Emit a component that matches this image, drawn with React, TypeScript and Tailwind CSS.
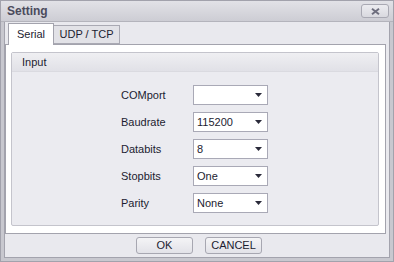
import { ReactNode } from 'react';

const ROWS = [
  { label: 'COMport', value: '' },
  { label: 'Baudrate', value: '115200' },
  { label: 'Databits', value: '8' },
  { label: 'Stopbits', value: 'One' },
  { label: 'Parity', value: 'None' },
];

const font = { fontFamily: '"Liberation Sans", Arial, sans-serif' };

function Combo({ value }: { value: string }) {
  return (
    <div className="w-[75px] h-[20px] border border-[#a9a9b6] bg-white flex items-center pl-[3px] pr-[5px] text-[11px] text-[#1c1c30]">
      <span className="flex-1">{value}</span>
      <svg width="7" height="4" viewBox="0 0 7 4">
        <path d="M0 0 H7 L3.5 4 Z" fill="#2a2a3a" />
      </svg>
    </div>
  );
}

function Btn({ children }: { children: ReactNode }) {
  return (
    <div className="w-[57px] h-[17px] rounded-[3px] border border-[#a7a7b1] bg-gradient-to-b from-[#f4f4f6] to-[#e2e2e8] flex items-center justify-center text-[11px] text-[#1c1c30]">
      {children}
    </div>
  );
}

export default function App() {
  return (
    <div style={font} className="w-[394px] h-[262px] border border-[#a2a2ac] bg-[#c8c8cf] flex flex-col">
      {/* title bar */}
      <div className="h-[21px] bg-gradient-to-b from-[#e2e2e7] to-[#cdcdd4] border-b border-[#b4b4bc] flex items-center pl-[6px] pr-[4px]">
        <span className="flex-1 text-[12px] font-bold text-[#4b4b5c]">Setting</span>
        <div className="w-[28px] h-[14px] rounded-[3px] border border-[#a9a9b3] bg-gradient-to-b from-[#ececf0] to-[#d9d9df] flex items-center justify-center">
          <svg width="9" height="7" viewBox="0 0 9 7">
            <path d="M1 0.8 L8 6.2 M8 0.8 L1 6.2" stroke="#6e6e7e" strokeWidth="2" />
          </svg>
        </div>
      </div>

      <div className="flex-1 mx-[3px] mb-[3px] border-x border-b border-[#a3a3ad] bg-[#e9e9ee] flex flex-col">
        {/* tabs */}
        <div className="h-[22px] flex items-end pl-[3px] text-[11px] text-[#1c1c30] relative z-10">
          <div className="w-[46px] h-[22px] bg-white border border-b-0 border-[#a3a3ad] flex items-center justify-center -mb-px">
            Serial
          </div>
          <div className="w-[66px] h-[19px] bg-[#e2e2e7] border border-l-0 border-[#a9a9b3] flex items-center justify-center">
            UDP / TCP
          </div>
        </div>

        {/* panel */}
        <div className="h-[190px] mr-[3px] border border-[#a3a3ad] bg-white pl-[5px] pr-[6px] pt-[7px] pb-[7px] flex">
          <div className="flex-1 border border-[#c4c4cc] rounded-[2px] bg-[#ebebf0] flex flex-col">
            <div className="h-[19px] border-b border-[#dadae0] bg-gradient-to-b from-[#efeff2] to-[#e1e1e7] flex items-center pl-[10px] text-[11px] text-[#1c1c30]">
              Input
            </div>
            <div className="flex flex-col gap-[7px] pt-[13px] pl-[109px]">
              {ROWS.map((r, i) => (
                <div key={i} className="flex items-center h-[20px]">
                  <span className="w-[72px] text-[11px] text-[#1c1c30]">{r.label}</span>
                  <Combo value={r.value} />
                </div>
              ))}
            </div>
          </div>
        </div>

        {/* buttons */}
        <div className="flex-1 flex items-center justify-center gap-[12px] pl-[4px]">
          <Btn>OK</Btn>
          <Btn>CANCEL</Btn>
        </div>
      </div>
    </div>
  );
}
